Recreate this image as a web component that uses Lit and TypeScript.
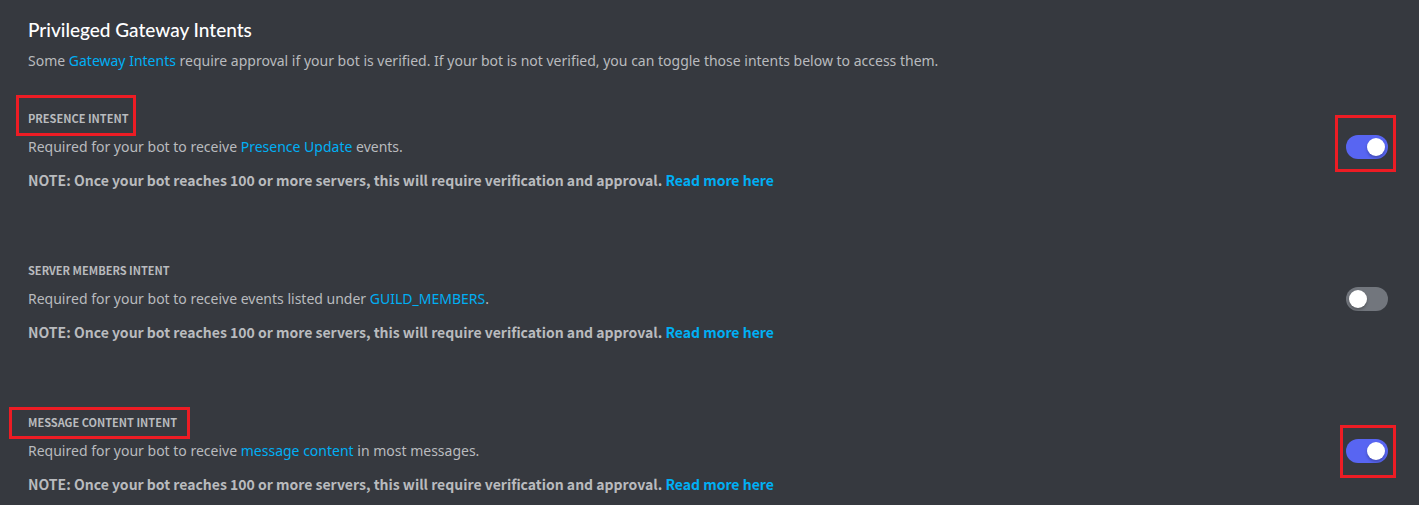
import { LitElement, html, css, nothing } from "lit";
import { customElement, property, state } from "lit/decorators.js";

interface Intent {
  id: string;
  title: string;
  before: string;
  link: string;
  after: string;
  enabled: boolean;
  mark: string;
}

@customElement("intent-switch")
class IntentSwitch extends LitElement {
  static styles = css`
    :host {
      display: block;
      line-height: 0;
    }
    .switch {
      appearance: none;
      box-sizing: border-box;
      width: 42px;
      height: 24px;
      margin: 0;
      padding: 3px;
      border-radius: 12px;
      background: #72767d;
      cursor: pointer;
      display: flex;
    }
    .switch::before {
      content: "";
      width: 18px;
      height: 18px;
      border-radius: 50%;
      background: #ffffff;
      box-shadow: 0 2px 3px rgba(0, 0, 0, 0.25);
    }
    .switch:checked {
      background: #5865f2;
      justify-content: flex-end;
    }
  `;
  @property({ type: Boolean }) on = false;
  @property() label = "";
  render() {
    return html`<input class="switch" type="checkbox" role="switch" aria-label=${this.label} .checked=${this.on} />`;
  }
}

@customElement("app-root")
class AppRoot extends LitElement {
  static styles = css`
    :host {
      display: block;
      min-height: 100vh;
      box-sizing: border-box;
      padding: 18px 31px 8px 28px;
      background: #36393f;
      color: #b9bbbe;
      font: 400 14px/24px "Noto Sans", "Open Sans", sans-serif;
    }
    h1, h2, p {
      margin: 0;
    }
    h1 {
      font-family: Lato, "Noto Sans", sans-serif;
      font-size: 19px;
      line-height: 24px;
      font-weight: 500;
      color: #ffffff;
    }
    .intro {
      margin-top: 7px;
    }
    a {
      color: #00aff4;
      text-decoration: none;
    }
    .list {
      display: grid;
      gap: 70px;
      margin-top: 37px;
    }
    .row {
      display: flex;
      align-items: flex-start;
      justify-content: space-between;
      gap: 24px;
    }
    h2 {
      position: relative;
      width: max-content;
      margin-bottom: 9px;
      font-family: "Noto Sans CJK SC", "Noto Sans", sans-serif;
      font-size: 11px;
      line-height: 16px;
      font-weight: 700;
      text-transform: uppercase;
    }
    .note {
      margin-top: 9px;
      font-family: "Noto Sans CJK SC", "Noto Sans", sans-serif;
      font-weight: 700;
    }
    .control {
      position: relative;
      margin-top: 25px;
    }
    .mark {
      position: absolute;
      box-sizing: border-box;
      border: 3px solid #ed1c24;
      pointer-events: none;
    }
    h2 .presence {
      inset: -15px auto -10px -12px;
      width: 120px;
    }
    h2 .content {
      inset: -7px auto -9px -19px;
      width: 181px;
    }
    .control .presence {
      inset: -20px -8px -13px -11px;
    }
    .control .content {
      inset: -14px -8px -15px -6px;
    }
  `;

  @state() intents: Intent[] = [
    { id: "presence", title: "Presence Intent", before: "Required for your bot to receive ", link: "Presence Update", after: " events.", enabled: true, mark: "presence" },
    { id: "members", title: "Server Members Intent", before: "Required for your bot to receive events listed under ", link: "GUILD_MEMBERS", after: ".", enabled: false, mark: "" },
    { id: "content", title: "Message Content Intent", before: "Required for your bot to receive ", link: "message content", after: " in most messages.", enabled: true, mark: "content" },
  ];

  mark(kind: string) {
    return kind ? html`<span class="mark ${kind}"></span>` : nothing;
  }

  render() {
    return html`
      <h1>Privileged Gateway Intents</h1>
      <p class="intro">Some <a href="#gateway">Gateway Intents</a> require approval if your bot is verified. If your bot is not verified, you can toggle those intents below to access them.</p>
      <div class="list">
        ${this.intents.map((i) => html`
          <section class="row">
            <div>
              <h2>${i.title}${this.mark(i.mark)}</h2>
              <p>${i.before}<a href="#${i.id}">${i.link}</a>${i.after}</p>
              <p class="note">NOTE: Once your bot reaches 100 or more servers, this will require verification and approval. <a href="#verification">Read more here</a></p>
            </div>
            <div class="control">
              <intent-switch .on=${i.enabled} .label=${i.title}></intent-switch>
              ${this.mark(i.mark)}
            </div>
          </section>`)}
      </div>
    `;
  }
}
